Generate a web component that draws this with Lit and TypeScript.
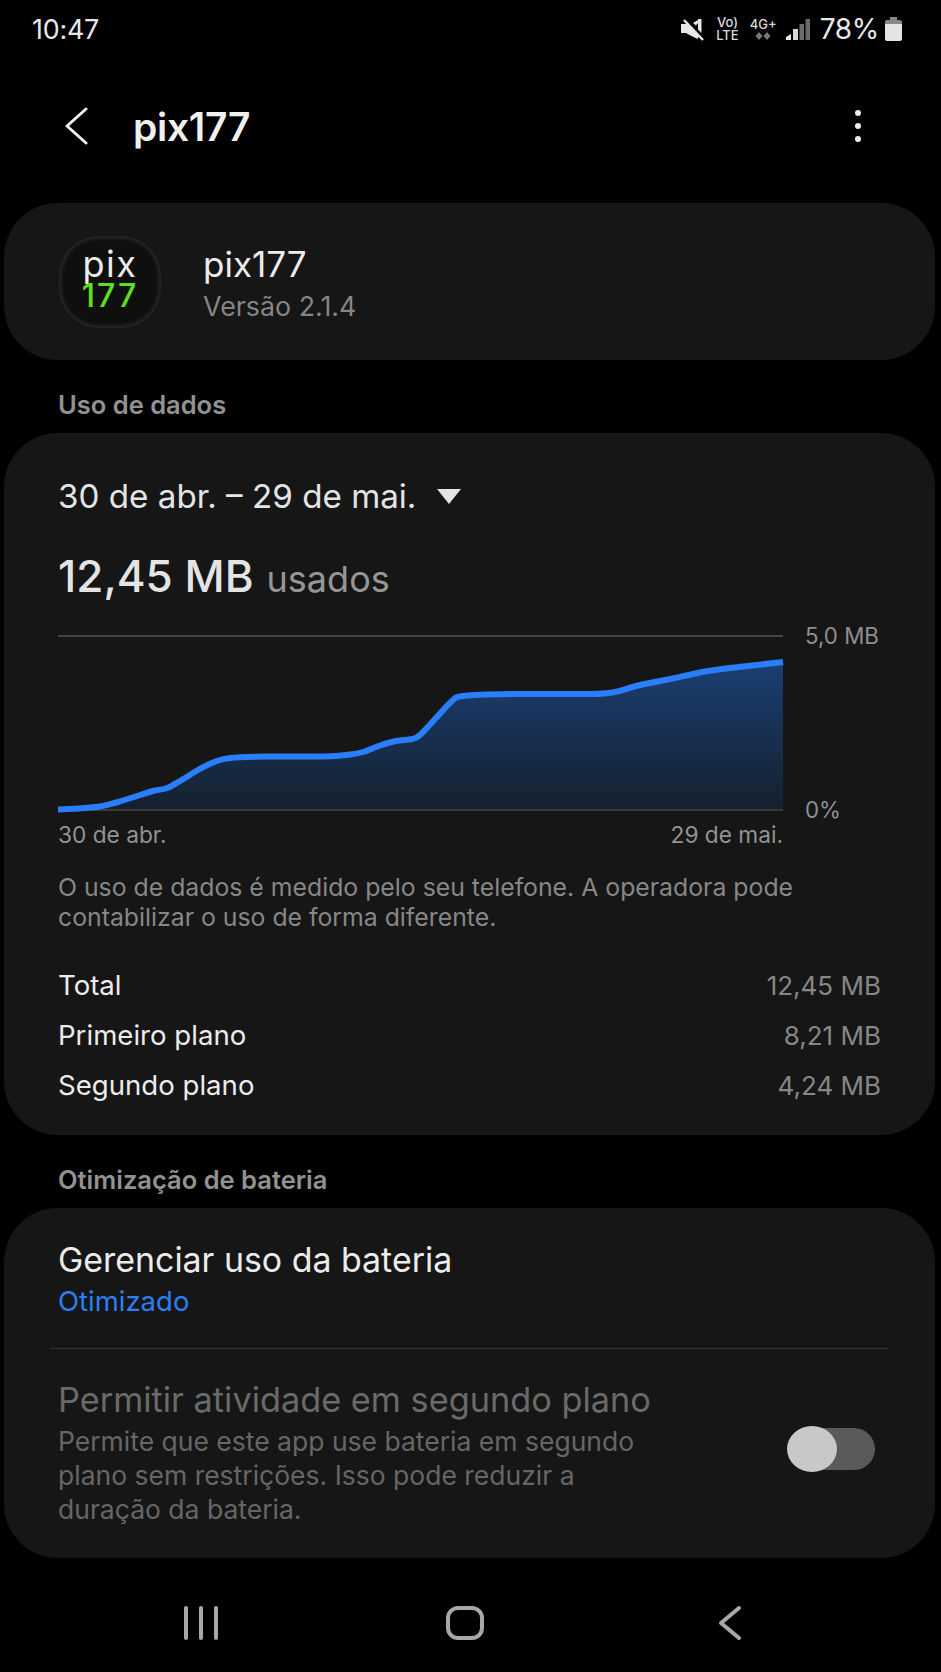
import { LitElement, html, css, svg } from "lit";
import { customElement } from "lit/decorators.js";

const PTS: [number, number][] = [
  [0, 174.5], [20, 173.5], [42, 171.5], [60, 167], [82, 160], [95, 156], [109, 153], [122, 146],
  [140, 135], [155, 127.5], [172, 123], [210, 121.5], [265, 121.5], [292, 119.5], [305, 117],
  [322, 110.5], [338, 106], [354, 104], [362, 100], [378, 83], [393, 67], [405, 61], [452, 59],
  [532, 59], [557, 57], [580, 50.5], [612, 44], [650, 36], [690, 31], [725, 27],
];

function smooth(points: [number, number][]) {
  let d = `M${points[0][0]} ${points[0][1]}`;
  for (let i = 0; i < points.length - 1; i++) {
    const p0 = points[Math.max(0, i - 1)];
    const p1 = points[i];
    const p2 = points[i + 1];
    const p3 = points[Math.min(points.length - 1, i + 2)];
    const c1x = p1[0] + (p2[0] - p0[0]) / 6;
    const c1y = p1[1] + (p2[1] - p0[1]) / 6;
    const c2x = p2[0] - (p3[0] - p1[0]) / 6;
    const c2y = p2[1] - (p3[1] - p1[1]) / 6;
    d += ` C${c1x.toFixed(1)} ${c1y.toFixed(1)} ${c2x.toFixed(1)} ${c2y.toFixed(1)} ${p2[0]} ${p2[1]}`;
  }
  return d;
}

const LINE = smooth(PTS);

@customElement("app-root")
export class AppRoot extends LitElement {
  static styles = css`
    :host {
      display: block;
      width: 941px;
      height: 1672px;
      background: #000;
      color: #fff;
      font-family: Inter, "Noto Sans", "Liberation Sans", sans-serif;
      overflow: hidden;
    }
    .status {
      height: 58px;
      display: flex;
      align-items: center;
      justify-content: space-between;
      padding: 0 39px 0 32px;
      box-sizing: border-box;
    }
    .time { font-size: 26.8px; color: #e8e8e8; letter-spacing: -0.2px; }
    .sys { display: flex; align-items: center; }
    .sys svg { display: block; }
    .tiny {
      display: flex; flex-direction: column; align-items: center;
      font-size: 13px; line-height: 13px; font-weight: 500; color: #d8d8d8;
    }
    .volte { margin-left: 12px; }
    .net { margin-left: 11px; }
    .sig { margin-left: 9px; }
    .pct { font-size: 28px; color: #e8e8e8; margin-left: 10px; letter-spacing: -0.3px; }
    .bat { margin-left: 6px; }
    .bar {
      height: 145px;
      display: flex;
      align-items: center;
      padding: 0 0 9px 63px;
      box-sizing: border-box;
    }
    .bar .title { font-size: 39px; font-weight: 600; margin-left: 44px; color: #f0f0f0; flex: 1; letter-spacing: -0.3px; }
    .dots { display: flex; flex-direction: column; gap: 6.5px; margin-right: 80px; }
    .dots i { width: 6.5px; height: 6.5px; border-radius: 50%; background: #eee; display: block; }
    .card {
      margin: 0 6px 0 4px;
      background: #161616;
      border-radius: 54px;
    }
    .app {
      height: 157px;
      display: flex;
      align-items: center;
      padding-left: 55px;
      box-sizing: border-box;
    }
    .logo {
      width: 102px; height: 92px;
      border-radius: 40px;
      background: #0f0f0f;
      box-shadow: inset 0 0 4px 2px #2c2c2c;
      box-sizing: border-box;
      display: flex; flex-direction: column; align-items: center; justify-content: center;
      font-weight: 400;
    }
    .logo .l1 { font-size: 36px; line-height: 30px; color: #ececec; margin-top: -4px; letter-spacing: 1.5px; }
    .logo .l2 { font-size: 32px; line-height: 28px; color: #5fe01e; font-weight: 500; letter-spacing: 2px; margin-top: 2.4px; }
    .appinfo { margin-left: 42px; padding-top: 3px; display: flex; flex-direction: column; }
    .appname { font-size: 35px; line-height: 42px; color: #ececec; }
    .ver { font-size: 26.8px; line-height: 36px; color: #858585; margin-top: 3px; }
    .section {
      height: 73px;
      display: flex; align-items: flex-end;
      padding: 0 0 13px 58px;
      box-sizing: border-box;
      font-size: 25.5px; line-height: 30px; font-weight: 600; color: #929292;
    }
    .data { height: 702px; padding: 40px 54px 0 54px; box-sizing: border-box; }
    .range { display: flex; align-items: center; font-size: 33.2px; line-height: 46px; color: #e4e4e4; }
    .range .tri { margin-left: 21px; display: block; }
    .used { display: flex; align-items: baseline; margin-top: 27px; line-height: 60px; }
    .used b { font-size: 44px; font-weight: 500; color: #e4e4e4; }
    .used span { font-size: 36px; color: #969696; margin-left: 13px; }
    .chart { margin-top: 26px; display: flex; width: 823px; }
    .chart svg { display: block; overflow: visible; flex: none; }
    .ylabels {
      display: flex; flex-direction: column; justify-content: space-between;
      margin: -14px 0 -14px 22px;
      font-size: 22.3px; line-height: 30px; color: #8f8f8f;
    }
    .xlabels {
      width: 725px; display: flex; justify-content: space-between;
      margin-top: 9px;
      font-size: 22.7px; line-height: 30px; color: #939393;
    }
    .note { margin-top: 22px; font-size: 24.8px; line-height: 30px; color: #878787; width: 790px; }
    .rows { margin-top: 28px; display: flex; flex-direction: column; }
    .row { height: 50px; display: flex; align-items: center; justify-content: space-between; font-size: 27.6px; color: #ececec; }
    .row span:last-child { color: #868686; font-size: 26px; }
    .bat-card { height: 350px; padding-top: 30px; box-sizing: border-box; }
    .item { padding: 0 54px; }
    .item .h { font-size: 33.9px; line-height: 44px; color: #ececec; }
    .item .s { font-size: 27.5px; line-height: 34px; color: #2a7ff5; margin-top: 2px; }
    .sep { height: 1px; background: #333; margin: 30px 46px 29px 46px; }
    .perm { display: flex; align-items: center; justify-content: space-between; padding: 0 60px 0 54px; }
    .perm .h { font-size: 34.3px; line-height: 44px; color: #6a6a6a; }
    .perm .d { font-size: 26.5px; line-height: 34px; color: #666; width: 610px; margin-top: 2px; }
    .toggle { width: 87px; height: 42px; border-radius: 21px; background: #5a5a5a; position: relative; flex: none; margin-top: -6px; }
    .toggle::before {
      content: ""; position: absolute; left: -1px; top: -2px;
      width: 50px; height: 46px; border-radius: 50%;
      background: #c8c8c8;
    }
    .nav {
      display: flex; align-items: center;
      padding: 47px 0 0 183px;
    }
    .nav svg { display: block; }
    .nav .home { margin-left: 226px; }
    .nav .back { margin-left: 232px; }
    .mute { margin-right: -1px; }
  `;

  render() {
    const area = `${LINE} L725 176 L0 176 Z`;
    return html`
      <div class="status">
        <span class="time">10:47</span>
        <div class="sys">
          <svg class="mute" width="24" height="24" viewBox="0 0 24 24">
            <path d="M0 7h5.500L13 14l5 5-1.500 3-7-3.500L5 16H0z" fill="#e8e8e8"/>
            <path d="M17 2h3.500v14l-3.500-3.500zM12 6l5-3v3l-2 2.500z" fill="#e8e8e8"/>
            <path d="M2 0l21 22" stroke="#000" stroke-width="2"/>
            <path d="M3 3l19 20" stroke="#e8e8e8" stroke-width="2.400"/>
          </svg>
          <div class="tiny volte"><span>Vo)</span><span>LTE</span></div>
          <div class="tiny net">
            <span>4G+</span>
            <svg width="18" height="10" viewBox="0 0 18 10">
              <path d="M5 1l3.500 4L5 9 1.500 5z" fill="#777"/>
              <path d="M13 1l3.500 4L13 9 9.500 5z" fill="#777"/>
            </svg>
          </div>
          <svg class="sig" width="24" height="23" viewBox="0 0 24 23">
            <path d="M0 19l5-3v6H0z" fill="#e8e8e8"/>
            <rect x="7" y="11" width="5" height="11" fill="#d8d8d8"/>
            <rect x="13.500" y="6" width="4.500" height="16" fill="#6a6a6a"/>
            <rect x="19.500" y="1" width="4.500" height="21" fill="#6a6a6a"/>
          </svg>
          <span class="pct">78%</span>
          <svg class="bat" width="17" height="24" viewBox="0 0 17 24">
            <path d="M5 0h7v3H5z" fill="#888"/>
            <path d="M2 3h13a2 2 0 0 1 2 2v2H0V5a2 2 0 0 1 2-2z" fill="#888"/>
            <path d="M0 7h17v15a2 2 0 0 1-2 2H2a2 2 0 0 1-2-2z" fill="#e4e4e4"/>
          </svg>
        </div>
      </div>
      <div class="bar">
        <svg width="26" height="38" viewBox="0 0 26 38">
          <path d="M23 2L4 19l19 17" fill="none" stroke="#f0f0f0" stroke-width="3" stroke-linecap="round" stroke-linejoin="round"/>
        </svg>
        <span class="title">pix177</span>
        <div class="dots"><i></i><i></i><i></i></div>
      </div>

      <div class="card app">
        <div class="logo">
          <span class="l1">pix</span>
          <span class="l2">177</span>
        </div>
        <div class="appinfo">
          <span class="appname">pix177</span>
          <span class="ver">Versão 2.1.4</span>
        </div>
      </div>

      <div class="section">Uso de dados</div>
      <div class="card data">
        <div class="range">
          <span>30 de abr. – 29 de mai.</span>
          <svg class="tri" width="24" height="15" viewBox="0 0 24 15"><path d="M0 0h24L12 15z" fill="#e4e4e4"/></svg>
        </div>
        <div class="used"><b>12,45 MB</b><span>usados</span></div>
        <div class="chart">
          <svg width="725" height="176" viewBox="0 0 725 176">
            <defs>
              <linearGradient id="g" x1="0" y1="0" x2="0" y2="1">
                <stop offset="0" stop-color="#1a3f72"/>
                <stop offset="1" stop-color="#15202e"/>
              </linearGradient>
            </defs>
            <line x1="0" y1="1" x2="725" y2="1" stroke="#444" stroke-width="2"/>
            <path d="${area}" fill="url(#g)"/>
            <line x1="0" y1="175" x2="725" y2="175" stroke="#3a3a3a" stroke-width="2"/>
            ${svg`<path d="${LINE}" fill="none" stroke="#2a7dfb" stroke-width="6"/>`}
          </svg>
          <div class="ylabels"><span>5,0 MB</span><span>0%</span></div>
        </div>
        <div class="xlabels"><span>30 de abr.</span><span>29 de mai.</span></div>
        <div class="note">O uso de dados é medido pelo seu telefone. A operadora pode contabilizar o uso de forma diferente.</div>
        <div class="rows">
          <div class="row"><span>Total</span><span>12,45 MB</span></div>
          <div class="row"><span>Primeiro plano</span><span>8,21 MB</span></div>
          <div class="row"><span>Segundo plano</span><span>4,24 MB</span></div>
        </div>
      </div>

      <div class="section">Otimização de bateria</div>
      <div class="card bat-card">
        <div class="item">
          <div class="h">Gerenciar uso da bateria</div>
          <div class="s">Otimizado</div>
        </div>
        <div class="sep"></div>
        <div class="perm">
          <div>
            <div class="h">Permitir atividade em segundo plano</div>
            <div class="d">Permite que este app use bateria em segundo plano sem restrições. Isso pode reduzir a duração da bateria.</div>
          </div>
          <div class="toggle"></div>
        </div>
      </div>

      <div class="nav">
        <svg width="36" height="34" viewBox="0 0 36 34">
          <path d="M3 2v30M18 2v30M33 2v30" stroke="#a8a8a8" stroke-width="4" stroke-linecap="round"/>
        </svg>
        <svg class="home" width="40" height="36" viewBox="0 0 40 36">
          <rect x="3" y="3" width="34" height="30" rx="10" fill="none" stroke="#a8a8a8" stroke-width="4"/>
        </svg>
        <svg class="back" width="26" height="36" viewBox="0 0 26 36">
          <path d="M22 3L4 18l18 15" fill="none" stroke="#a8a8a8" stroke-width="4" stroke-linecap="round" stroke-linejoin="round"/>
        </svg>
      </div>
    `;
  }
}
